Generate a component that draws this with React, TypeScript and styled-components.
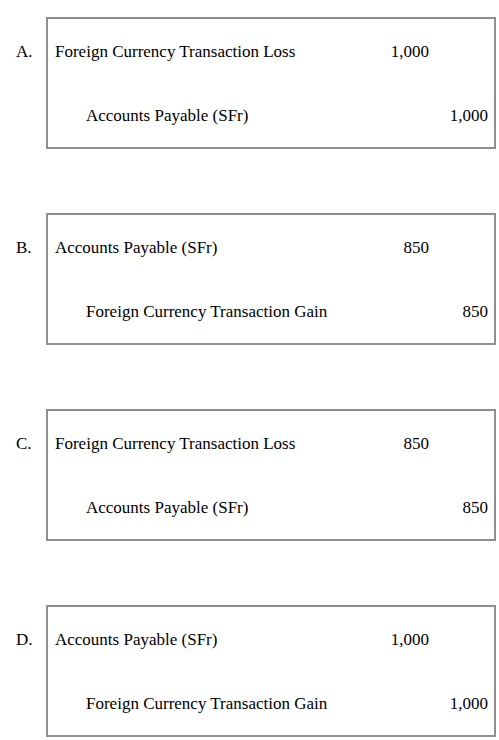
import React from "react";
import styled, { createGlobalStyle } from "styled-components";

const Global = createGlobalStyle`
  html, body { margin: 0; padding: 0; background: #ffffff; }
  body { font-family: "Liberation Serif", "Times New Roman", serif; color: #000; }
`;

const Page = styled.div`
  width: 499px;
  padding-top: 17px;
  display: flex;
  flex-direction: column;
  gap: 64px;
`;

const Item = styled.div`
  display: flex;
  align-items: flex-start;
`;

const Letter = styled.div`
  flex: 0 0 30px;
  padding-left: 16px;
  padding-top: 25px;
  font-size: 17px;
  line-height: 20px;
`;

const Box = styled.div`
  box-sizing: border-box;
  flex: 0 0 450px;
  width: 450px;
  height: 132px;
  border: 2px solid #8e8e8e;
  padding: 23px 6px 0 7px;
  display: grid;
  grid-template-columns: 1fr 80px 59px;
  grid-template-rows: 20px 20px;
  row-gap: 44px;
  font-size: 17px;
  line-height: 20px;
`;

const Account = styled.div<{ $indent?: boolean }>`
  grid-column: 1;
  padding-left: ${(p) => (p.$indent ? "31px" : "0")};
  white-space: nowrap;
`;

const Amount = styled.div<{ $col: number }>`
  grid-column: ${(p) => p.$col};
  text-align: right;
`;

type Entry = {
  letter: string;
  debit: string;
  credit: string;
  amount: string;
};

const entries: Entry[] = [
  { letter: "A.", debit: "Foreign Currency Transaction Loss", credit: "Accounts Payable (SFr)", amount: "1,000" },
  { letter: "B.", debit: "Accounts Payable (SFr)", credit: "Foreign Currency Transaction Gain", amount: "850" },
  { letter: "C.", debit: "Foreign Currency Transaction Loss", credit: "Accounts Payable (SFr)", amount: "850" },
  { letter: "D.", debit: "Accounts Payable (SFr)", credit: "Foreign Currency Transaction Gain", amount: "1,000" },
];

export default function App() {
  return (
    <>
      <Global />
      <Page>
        {entries.map((e) => (
          <Item key={e.letter}>
            <Letter>{e.letter}</Letter>
            <Box>
              <Account>{e.debit}</Account>
              <Amount $col={2}>{e.amount}</Amount>
              <Account $indent>{e.credit}</Account>
              <Amount $col={3}>{e.amount}</Amount>
            </Box>
          </Item>
        ))}
      </Page>
    </>
  );
}
